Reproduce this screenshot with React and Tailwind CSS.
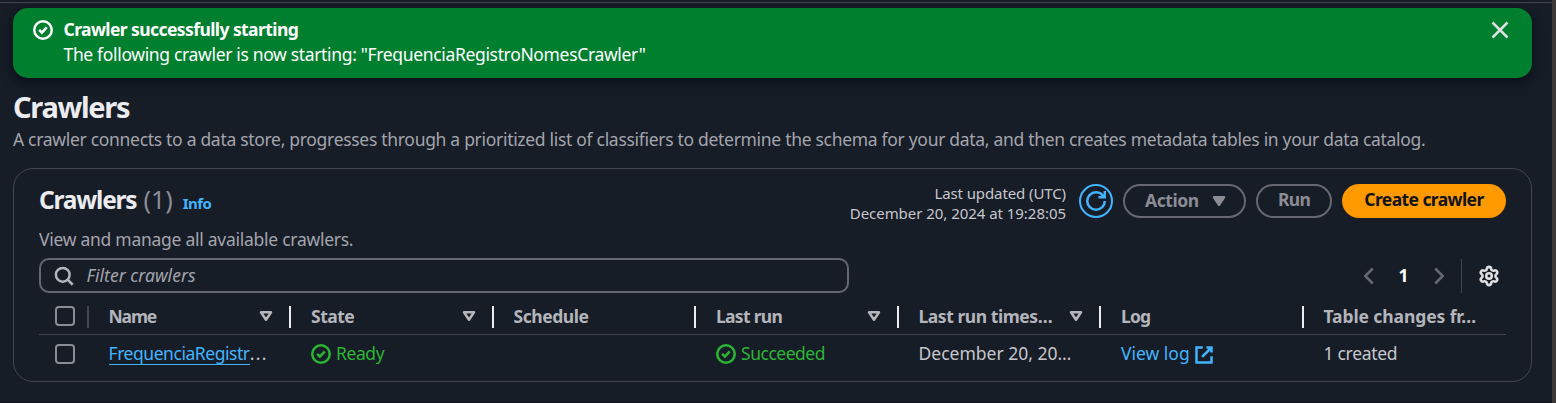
import { Settings } from "lucide-react";

function Icon({ children, className = "" }) {
  return (
    <svg
      viewBox="0 0 16 16"
      fill="none"
      stroke="currentColor"
      strokeWidth="2"
      className={`block h-5 w-5 shrink-0 ${className}`}
    >
      {children}
    </svg>
  );
}

function SuccessIcon({ className = "" }) {
  return (
    <Icon className={className}>
      <circle cx="8" cy="8" r="7" />
      <path d="M4.9 7.9 7.1 10.1 11 5.9" />
    </Icon>
  );
}

function Caret({ filled = false, className = "" }) {
  return (
    <Icon className={className}>
      <path d="M4 5h8l-4 6-4-6Z" fill={filled ? "currentColor" : "none"} strokeLinejoin="round" />
    </Icon>
  );
}

function Checkbox() {
  return <span className="block h-5 w-5 rounded-[4px] border-2 border-[#8c8c94]" />;
}

const columns = [
  { label: "Name", sortable: true, track: "tracking-[-1.15px]" },
  { label: "State", sortable: true, track: "tracking-[-0.5px]" },
  { label: "Schedule", track: "tracking-[-0.45px]" },
  { label: "Last run", sortable: true, track: "tracking-[-0.7px]" },
  { label: "Last run times…", sortable: true, track: "tracking-[-0.45px]" },
  { label: "Log", track: "tracking-[-0.8px]" },
  { label: "Table changes fr…", last: true, track: "tracking-[-0.1px]" },
];

const GRID = "grid grid-cols-[49.5px_202.5px_202.5px_202.5px_202.5px_202.5px_202.5px_202.5px]";

function Flash() {
  return (
    <div className="mt-[5px] flex h-[70px] rounded-[15px] bg-[#00802f] pl-5 pt-[9px] text-white shadow-[0_5px_12px_rgba(0,7,22,0.6)]">
      <SuccessIcon className="mt-[3px]" />
      <div className="ml-[10.5px] flex-1">
        <div className="font-bold tracking-[-0.58px]">Crawler successfully starting</div>
        <div className="tracking-[-0.34px]">
          The following crawler is now starting: "FrequenciaRegistroNomesCrawler"
        </div>
      </div>
      <Icon className="mr-[22px] mt-[3px] text-[#dedee3]">
        <path d="m2 2 12 12M14 2 2 14" />
      </Icon>
    </div>
  );
}

function PanelHeader() {
  return (
    <div className="flex h-[59px] justify-between">
      <div>
        <h2 className="flex h-[30px] items-baseline text-[25px] leading-[30px]">
          <span className="text-[24.5px] font-bold tracking-[-1.2px] text-[#ebebf0]">Crawlers</span>
          <span className="ml-[7px] text-[#8c8c94]">(1)</span>
          <span className="ml-[10px] text-[15px] font-bold tracking-[-0.55px] text-[#42b4ff]">Info</span>
        </h2>
        <p className="mt-[13px] tracking-[-0.27px] text-[#a4a4ad]">
          View and manage all available crawlers.
        </p>
      </div>
      <div className="flex h-[34px] items-center">
        <div className="mr-[13px] pt-1 text-right text-[15px] leading-5 text-[#c6c6cd]">
          <div className="tracking-[-0.1px]">Last updated (UTC)</div>
          <div className="tracking-[-0.04px]">December 20, 2024 at 19:28:05</div>
        </div>
        <button className="flex h-[34px] w-[34px] items-center justify-center rounded-full border-2 border-[#42b4ff] text-[#42b4ff]">
          <Icon>
            <path d="M10 5h5V0" />
            <path d="M15 8a6.957 6.957 0 0 1-7 7 6.957 6.957 0 0 1-7-7 6.957 6.957 0 0 1 7-7 6.87 6.87 0 0 1 6.3 4" />
          </Icon>
        </button>
        <button className="ml-[10px] flex h-[34px] w-[123px] items-center rounded-full border-2 border-[#656871] pl-5 font-bold text-[#8c8c94]">
          <span className="w-[64px] pb-[2px] text-left tracking-[-0.45px]">Action</span>
          <Caret filled />
        </button>
        <button className="ml-[10px] flex h-[34px] w-[76px] items-center justify-center rounded-full border-2 border-[#656871] pb-[4px] font-bold tracking-[-0.7px] text-[#8c8c94]">
          Run
        </button>
        <button className="ml-[10px] flex h-[34px] w-[164px] items-center justify-center rounded-full bg-[#ff9900] pb-[3px] font-bold tracking-[-0.6px] text-[#0f141a]">
          Create crawler
        </button>
      </div>
    </div>
  );
}

function Toolbar() {
  return (
    <div className="mt-[15px] flex h-[35px] items-center justify-between">
      <div className="flex h-[35px] w-[810px] items-center rounded-[10px] border-2 border-[#656871] pl-[13px]">
        <Icon className="text-[#b4b4bb]">
          <circle cx="7" cy="7" r="5.5" />
          <path d="m15 15-4.2-4.2" />
        </Icon>
        <span className="ml-[12.5px] pb-px italic tracking-[0.05px] text-[#a4a4ad]">Filter crawlers</span>
      </div>
      <div className="flex h-[35px] items-center">
        <Icon className="text-[#656871]">
          <path d="m11 2-6 6 6 6" />
        </Icon>
        <span className="w-[49px] pb-px text-center font-bold text-white">1</span>
        <Icon className="ml-px text-[#656871]">
          <path d="m5 2 6 6-6 6" />
        </Icon>
        <span className="ml-3 h-[34px] w-px bg-[#424650]" />
        <Settings size={22} strokeWidth={2.8} className="ml-4 mr-[6px] text-[#dedee3]" />
      </div>
    </div>
  );
}

function CrawlerTable() {
  return (
    <div className="pt-px">
      <div className={`${GRID} h-[41px] border-b border-[#424650] font-bold text-[#b4b4bb]`}>
        <div className="mt-3 flex h-[22px] items-center border-r-2 border-[#424650] pb-[2px] pl-[15.5px]">
          <Checkbox />
        </div>
        {columns.map((col) => (
          <div
            key={col.label}
            className={`mt-3 flex h-[22px] items-center justify-between pb-[2px] pl-5 pr-[13px] ${
              col.last ? "" : "border-r-2 border-[#ebebf0]"
            }`}
          >
            <span className={`whitespace-nowrap ${col.track}`}>{col.label}</span>
            {col.sortable && <Caret />}
          </div>
        ))}
      </div>
      <div className={`${GRID} h-[38px] items-center text-[#c6c6cd]`}>
        <div className="pl-[15.5px]">
          <Checkbox />
        </div>
        <div className="flex whitespace-nowrap pb-px pl-5">
          <span className="h-[24px] border-b border-[#42b4ff] tracking-[-0.45px] text-[#42b4ff]">
            FrequenciaRegistr
          </span>
          <span className="tracking-[1.4px]">...</span>
        </div>
        <div className="flex items-center gap-[5px] pl-5 text-[#2bb534]">
          <SuccessIcon />
          <span className="pb-px tracking-[-0.4px]">Ready</span>
        </div>
        <div />
        <div className="flex items-center gap-[5px] pl-5 text-[#2bb534]">
          <SuccessIcon />
          <span className="pb-px tracking-[-0.48px]">Succeeded</span>
        </div>
        <div className="whitespace-nowrap pb-px pl-5">December 20, 20…</div>
        <div className="flex items-center gap-1 pl-5 text-[#42b4ff]">
          <span className="pb-px">View log</span>
          <Icon className="mt-px">
            <path d="M10 2h4v4M6.5 9.5 14 2M14 9.05V14H2V2h5" />
          </Icon>
        </div>
        <div className="pb-px pl-5 tracking-[-0.3px]">1 created</div>
      </div>
    </div>
  );
}

export default function App() {
  return (
    <div className="flex h-[403px] w-[1556px] overflow-hidden bg-[#161d26] font-['Noto_Sans',sans-serif] text-[17.5px] leading-[25px]">
      <div className="flex h-full w-[1552px] flex-col border-b border-[#0f141a]">
        <div className="h-[3px] shrink-0 border-b border-[#424650]" />
        <main className="w-[1532px] pl-[13px]">
          <Flash />
          <h1 className="mt-[10px] text-[29px] font-bold leading-[38px] tracking-[-1.3px] text-[#ebebf0]">
            Crawlers
          </h1>
          <p className="mt-px whitespace-nowrap tracking-[-0.304px] text-[#a4a4ad]">
            A crawler connects to a data store, progresses through a prioritized list of classifiers to determine
            the schema for your data, and then creates metadata tables in your data catalog.
          </p>
          <section className="mt-4 h-[214px] rounded-[20px] border border-[#424650] px-[25px] pt-[15px]">
            <PanelHeader />
            <Toolbar />
            <CrawlerTable />
          </section>
        </main>
      </div>
      <div className="w-1 bg-[#3b3a38]" />
    </div>
  );
}
